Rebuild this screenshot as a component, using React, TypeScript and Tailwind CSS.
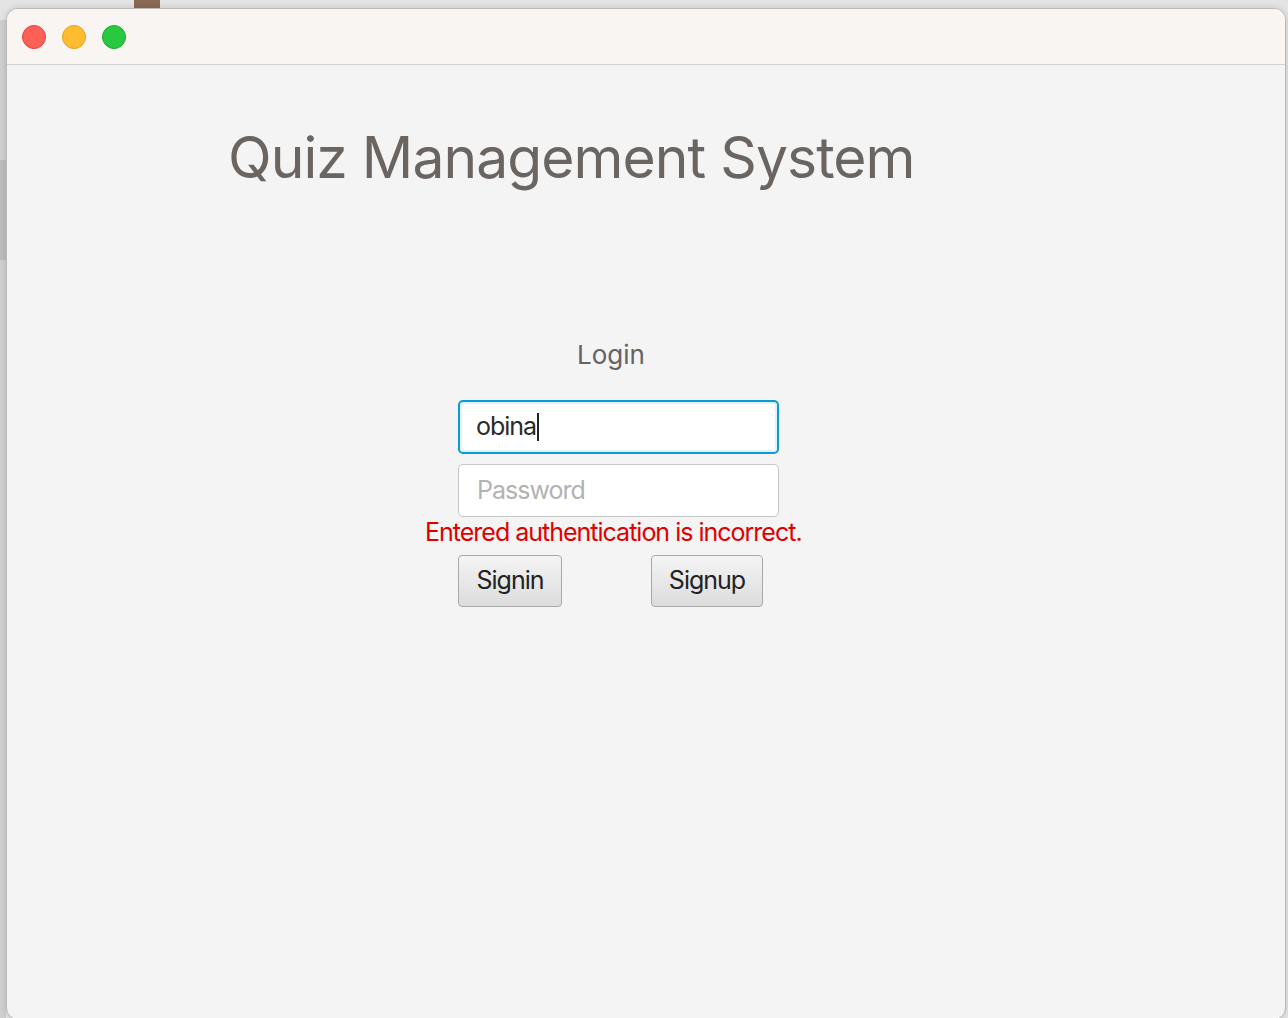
export default function App() {
  return (
    <div className="relative h-[1018px] w-[1288px] overflow-hidden bg-[#e4e4e4] [font-family:Inter,'Liberation_Sans',sans-serif]">
      {/* Desktop strip on the left, behind the window */}
      <div className="absolute left-0 top-[20px] h-[998px] w-[6px] bg-[#cfcfcf]" />
      <div className="absolute left-0 top-[160px] h-[100px] w-[6px] bg-[#bdbdbd]" />
      <div className="absolute left-[134px] top-0 h-[8px] w-[26px] bg-[#8a6a55]" />

      {/* Window */}
      <div className="relative ml-[6px] mt-[8px] flex h-[1012px] w-[1280px] flex-col overflow-hidden rounded-[12px] border border-[#b9b9b9] bg-[#f4f4f4] shadow-[0_0_6px_rgba(0,0,0,0.15)]">
        {/* Title bar */}
        <div className="flex h-[56px] shrink-0 items-center gap-[16px] border-b border-[#d6d2d0] bg-[#f9f5f3] pl-[15px]">
          <span className="h-[24px] w-[24px] rounded-full border border-[#e2463f] bg-[#fe5f57]" />
          <span className="h-[24px] w-[24px] rounded-full border border-[#e1a325] bg-[#febc2e]" />
          <span className="h-[24px] w-[24px] rounded-full border border-[#1bac2b] bg-[#2ac840]" />
        </div>

        {/* Content */}
        <div className="flex flex-col">
          <h1 className="ml-[221px] mt-[58px] whitespace-nowrap text-[57px] font-normal leading-[70px] tracking-[-0.95px] text-[#6b6562]">
            Quiz Management System
          </h1>

          <div className="ml-[451px] mt-[146px] flex w-[321px] flex-col">
            <div className="ml-[119px] text-[26px] leading-[32px] text-[#666262]">Login</div>

            <div className="mt-[29px] flex h-[54px] items-center rounded-[5px] border-2 border-[#0a9ad6] bg-white pl-[16px] shadow-[inset_0_0_0_2px_#dff1fa]">
              <span className="text-[25px] tracking-[-1px] text-[#2a2a2a]">obina</span>
              <span className="ml-[1px] h-[28px] w-[2px] bg-[#222]" />
            </div>

            <div className="mt-[10px] flex h-[53px] items-center rounded-[5px] border border-[#c6c6c6] bg-white pl-[18px]">
              <span className="text-[25px] tracking-[-1px] text-[#b3b3b3]">Password</span>
            </div>

            <div className="-ml-[33px] whitespace-nowrap text-[25px] leading-[30px] tracking-[-1px] text-[#e00000]">
              Entered authentication is incorrect.
            </div>

            <div className="mt-[8px] flex gap-[89px]">
              <button className="h-[52px] w-[104px] rounded-[4px] border border-[#a9a9a9] bg-gradient-to-b from-[#f4f4f4] to-[#dcdcdc] text-[25px] tracking-[-1px] text-[#222]">
                Signin
              </button>
              <button className="h-[52px] w-[112px] rounded-[4px] border border-[#a9a9a9] bg-gradient-to-b from-[#f4f4f4] to-[#dcdcdc] text-[25px] tracking-[-1px] text-[#222]">
                Signup
              </button>
            </div>
          </div>
        </div>
      </div>
    </div>
  );
}
